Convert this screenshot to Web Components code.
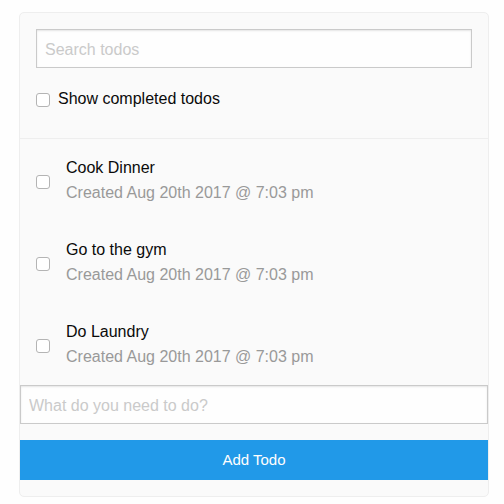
<!DOCTYPE html>
<html lang="en">
<head>
<meta charset="utf-8">
<meta name="viewport" content="width=device-width, initial-scale=1">
<title>Todos</title>
<style>
body { margin: 0; background: #fefefe; color: #0a0a0a; font: 16px/24px "Liberation Sans", Arial, sans-serif; }
</style>
</head>
<body>
<todo-app></todo-app>
<script>
const shared = `
*, *::before, *::after { box-sizing: border-box; }
input, button { font: inherit; margin: 0; }
input[type="text"], input[type="search"] {
  display: block; width: 100%; height: 39px; padding: 9px 8px 7px; appearance: none;
  border: 1px solid #cacaca; border-radius: 0; background: #fefefe; color: #0a0a0a;
  box-shadow: inset 0 1px 2px rgba(10,10,10,.1);
}
input::placeholder { color: #cacaca; opacity: 1; }
input[type="checkbox"] {
  display: block; flex: none; appearance: none; width: 14px; height: 14px;
  border: 1px solid #b4b4b4; border-radius: 3px; background: #fff;
}
input[type="checkbox"]:checked { background: #2199e8; border-color: #2199e8; }
`;

class TodoSearch extends HTMLElement {
  connectedCallback() {
    this.attachShadow({ mode: "open" }).innerHTML = `<style>${shared}
:host { display: block; padding: 16px 16px 27px; border-bottom: 1px solid #eee; }
.toggle { display: flex; align-items: center; gap: 8px; margin-top: 19px; }
.toggle input { margin-top: 2px; }
</style>
<input type="search" placeholder="Search todos" aria-label="Search todos">
<div class="toggle"><input type="checkbox" id="done"><label for="done">Show completed todos</label></div>`;
  }
}

class TodoItem extends HTMLElement {
  connectedCallback() {
    this.attachShadow({ mode: "open" }).innerHTML = `<style>${shared}
:host { display: block; padding: 16px; }
.row { display: flex; align-items: center; gap: 16px; }
.row input { margin-top: 4px; }
label { display: block; }
.title, .date { display: block; line-height: 25px; }
.date { color: #999; }
</style>
<div class="row"><input type="checkbox" id="check"><label for="check"><span class="title"><slot></slot></span><span class="date"><slot name="date"></slot></span></label></div>`;
  }
}

class TodoAdd extends HTMLElement {
  connectedCallback() {
    this.attachShadow({ mode: "open" }).innerHTML = `<style>${shared}
:host { display: block; padding-bottom: 16px; }
button { display: block; width: 100%; height: 40px; margin-top: 16px; padding: 0; border: 0; background: #2199e8; color: #fefefe; font-size: 15px; line-height: 16px; cursor: pointer; }
</style>
<form onsubmit="return false"><input type="text" placeholder="What do you need to do?" aria-label="What do you need to do?"><button type="submit">Add Todo</button></form>`;
  }
}

class TodoApp extends HTMLElement {
  connectedCallback() {
    this.attachShadow({ mode: "open" }).innerHTML = `<style>
:host { display: block; padding: 12px 15px 7px 19px; }
main { border: 1px solid #eee; border-radius: 5px; background: #fafafa; }
</style>
<main>
<todo-search></todo-search>
<section aria-label="Todos">
<todo-item>Cook Dinner<span slot="date">Created Aug 20th 2017 @ 7:03 pm</span></todo-item>
<todo-item>Go to the gym<span slot="date">Created Aug 20th 2017 @ 7:03 pm</span></todo-item>
<todo-item>Do Laundry<span slot="date">Created Aug 20th 2017 @ 7:03 pm</span></todo-item>
</section>
<todo-add></todo-add>
</main>`;
  }
}
customElements.define("todo-search", TodoSearch);
customElements.define("todo-item", TodoItem);
customElements.define("todo-add", TodoAdd);
customElements.define("todo-app", TodoApp);
</script>
</body>
</html>
